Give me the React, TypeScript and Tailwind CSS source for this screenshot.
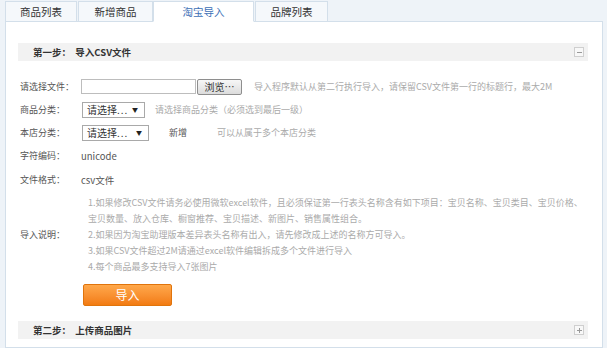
import { ReactNode } from "react";

const tabs = [
  { label: "商品列表", w: "w-[72px]", active: false },
  { label: "新增商品", w: "w-[75px]", active: false },
  { label: "淘宝导入", w: "w-[101px]", active: true },
  { label: "品牌列表", w: "w-[73px]", active: false },
];

const notes = [
  "1.如果修改CSV文件请务必使用微软excel软件，且必须保证第一行表头名称含有如下项目：宝贝名称、宝贝类目、宝贝价格、",
  "宝贝数量、放入仓库、橱窗推荐、宝贝描述、新图片、销售属性组合。",
  "2.如果因为淘宝助理版本差异表头名称有出入，请先修改成上述的名称方可导入。",
  "3.如果CSV文件超过2M请通过excel软件编辑拆成多个文件进行导入",
  "4.每个商品最多支持导入7张图片",
];

function SectionBar({ step, title, open }: { step: string; title: string; open: boolean }) {
  return (
    <div className="flex h-[18px] items-center justify-between bg-[#f2f2f2] pl-[15px] pr-[4px]">
      <span className="whitespace-pre text-[9.5px] font-bold text-[#333]">
        {step}：  {title}
      </span>
      <span className="relative flex h-[10px] w-[10px] items-center justify-center border border-[#cfcfcf] bg-[#f8f8f8]">
        <span className="h-px w-[5px] bg-[#999]" />
        {!open && <span className="absolute h-[5px] w-px bg-[#999]" />}
      </span>
    </div>
  );
}

function Row({ label, h, children }: { label: string; h: string; children: ReactNode }) {
  return (
    <div className={`flex items-center ${h}`}>
      <span className="w-[61px] shrink-0 text-[9px] text-[#555]">{label}</span>
      {children}
    </div>
  );
}

function Select({ w }: { w: string }) {
  return (
    <div className={`flex h-[16px] ${w} items-center justify-between border border-[#a9a9a9] bg-white pl-[4px] pr-[6px]`}>
      <span className="text-[10px] leading-none text-[#333]">
        请选择<span className="tracking-[1px]">...</span>
      </span>
      <span className="text-[6px] text-[#222]">▼</span>
    </div>
  );
}

export default function App() {
  return (
    <div className="h-[348px] w-[607px] overflow-hidden bg-[#eef3f8] font-['Noto_Sans_CJK_SC','Noto_Sans',sans-serif]">
      <div className="relative z-10 flex h-[22px] pl-[5px] pt-[1px]">
        {tabs.map((t, i) => (
          <div
            key={t.label}
            className={
              "flex h-[21px] items-center justify-center border border-[#d3dfea] text-[10.5px] " +
              t.w +
              (i > 0 && i !== 2 ? " ml-px" : "") +
              (t.active ? " border-b-white bg-white text-[#3d6fb6]" : " bg-[#f5f8fb] text-[#333]")
            }
          >
            {t.label}
          </div>
        ))}
      </div>

      <div className="-mt-px ml-[5px] h-[327px] w-[598px] border border-[#d3dfea] bg-white pl-[12px] pr-[14px] pt-[21px]">
        <SectionBar step="第一步" title="导入CSV文件" open />

        <div className="mt-[14px] pl-[2px]">
          <Row label="请选择文件：" h="h-[23px]">
            <div className="h-[15px] w-[115px] border border-[#bdbdbd] bg-white" />
            <button className="ml-px h-[16px] w-[45px] rounded-[2px] border border-[#8e8e8e] bg-gradient-to-b from-[#f7f7f7] to-[#dcdcdc] text-[10px] leading-none text-[#333]">
              浏览…
            </button>
            <span className="ml-[12px] whitespace-nowrap text-[9px] text-[#aaa]">
              导入程序默认从第二行执行导入，请保留CSV文件第一行的标题行，最大2M
            </span>
          </Row>
          <Row label="商品分类：" h="h-[23px]">
            <div className="ml-px">
              <Select w="w-[63px]" />
            </div>
            <span className="ml-[10px] whitespace-nowrap text-[9px] text-[#aaa]">
              请选择商品分类（必须选到最后一级）
            </span>
          </Row>
          <Row label="本店分类：" h="h-[23px]">
            <div className="ml-px">
              <Select w="w-[67px]" />
            </div>
            <span className="ml-[20px] text-[9px] text-[#555]">新增</span>
            <span className="ml-[30px] whitespace-nowrap text-[9px] text-[#aaa]">可以从属于多个本店分类</span>
          </Row>
          <Row label="字符编码：" h="h-[24px]">
            <span className="text-[9.5px] text-[#555]">unicode</span>
          </Row>
          <Row label="文件格式：" h="h-[24px]">
            <span className="text-[9.5px] text-[#555]">csv文件</span>
          </Row>

          <div className="mt-[3px] flex items-center">
            <span className="w-[61px] shrink-0 text-[9px] text-[#555]">导入说明：</span>
            <div className="pl-[7px] text-[9px] leading-[16px] text-[#aaa]">
              {notes.map((n) => (
                <div key={n} className="whitespace-nowrap">
                  {n}
                </div>
              ))}
            </div>
          </div>

          <button className="ml-[63px] mt-[9px] h-[22px] w-[89px] rounded-[2px] border border-[#e0740c] bg-gradient-to-b from-[#ffa84a] to-[#f27b0f] text-[12px] text-white">
            导入
          </button>
        </div>

        <div className="mt-[15px]">
          <SectionBar step="第二步" title="上传商品图片" open={false} />
        </div>
      </div>
    </div>
  );
}
